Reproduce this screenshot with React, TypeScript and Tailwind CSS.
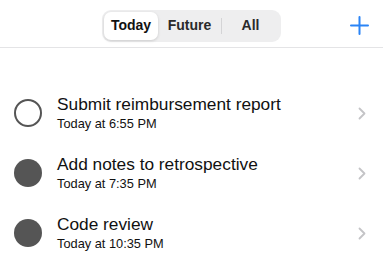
import React from "react";

type Task = {
  title: string;
  time: string;
  done: boolean;
};

const tasks: Task[] = [
  { title: "Submit reimbursement report", time: "Today at 6:55 PM", done: false },
  { title: "Add notes to retrospective", time: "Today at 7:35 PM", done: true },
  { title: "Code review", time: "Today at 10:35 PM", done: true },
];

function Chevron() {
  return (
    <svg width="8" height="13" viewBox="0 0 8 13" fill="none">
      <path
        d="M1.5 1.5 L6.5 6.5 L1.5 11.5"
        stroke="#c4c4c7"
        strokeWidth="1.8"
        strokeLinecap="round"
        strokeLinejoin="round"
      />
    </svg>
  );
}

function TaskRow({ task }: { task: Task }) {
  return (
    <div className="flex h-[60px] items-center pl-[14px] pr-[17px]">
      {task.done ? (
        <div className="h-[28px] w-[28px] rounded-full bg-[#555555]" />
      ) : (
        <div className="h-[28px] w-[28px] rounded-full border-2 border-[#555555]" />
      )}
      <div className="ml-[15px] flex flex-col">
        <div className="text-[17.3px] leading-[21px] text-[#111]">{task.title}</div>
        <div className="mt-[1px] text-[12.8px] leading-[16px] text-[#111]">{task.time}</div>
      </div>
      <div className="ml-auto">
        <Chevron />
      </div>
    </div>
  );
}

export default function App() {
  return (
    <div className="h-[263px] w-[383px] bg-white font-['Liberation_Sans',Arial,sans-serif]">
      <div className="relative flex h-[48px] items-center justify-center border-b border-[#e4e4e6]">
        <div className="mt-[4px] flex h-[32px] items-center rounded-[9px] bg-[#eeeeef] p-[2px] text-[14px]">
          <div className="flex h-full w-[54px] items-center justify-center rounded-[7px] bg-white font-bold text-[#111] shadow-[0_1px_3px_rgba(0,0,0,0.15)]">
            Today
          </div>
          <div className="flex h-full w-[63px] items-center justify-center font-semibold text-[#2a2a2a]">
            Future
          </div>
          <div className="h-[16px] w-px bg-[#d4d4d6]" />
          <div className="flex h-full w-[57px] items-center justify-center font-semibold text-[#2a2a2a]">
            All
          </div>
        </div>
        <button className="absolute right-[14px] top-[15px] flex h-[20px] w-[20px] items-center justify-center">
          <svg width="19" height="19" viewBox="0 0 19 19">
            <path d="M9.5 1 V18 M1 9.5 H18" stroke="#2a84f6" strokeWidth="2" strokeLinecap="round" />
          </svg>
        </button>
      </div>
      <div className="pt-[35px]">
        {tasks.map((t) => (
          <TaskRow key={t.title} task={t} />
        ))}
      </div>
    </div>
  );
}
